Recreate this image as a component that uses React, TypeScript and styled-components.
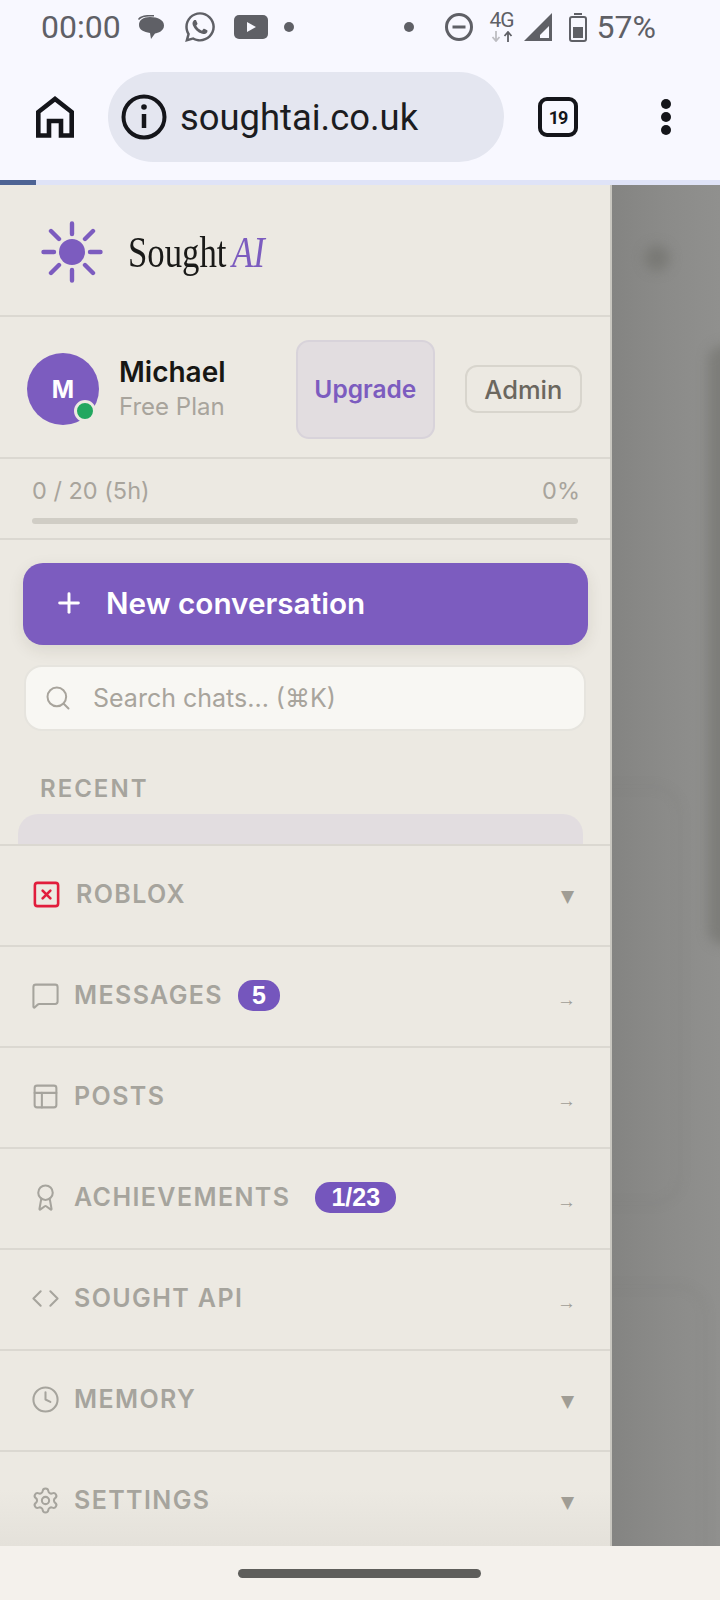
import React from "react"
import styled, { createGlobalStyle } from "styled-components"
import { Award, Clock, Code, MessageSquare, PanelsTopLeft, Plus, Search, Settings, SquareX } from "lucide-react"
import { FaWhatsapp } from "react-icons/fa"

const GlobalStyle = createGlobalStyle`
	html, body {
		margin: 0;
		padding: 0;
		background: #f4f1ec;
	}
	* {
		box-sizing: border-box;
	}
`

const Phone = styled.div`
	display: flex;
	flex-flow: column;
	width: 720px;
	height: 1600px;
	overflow: hidden;
	font-family: Inter, "Liberation Sans", sans-serif;
`

const StatusBar = styled.div`
	display: flex;
	align-items: center;
	justify-content: space-between;
	flex: none;
	height: 54px;
	padding: 0 64px 0 41px;
	background: #f8f8ff;
	color: #5f6066;
	font-family: Roboto, sans-serif;
	font-size: 32px;
`

const StatusGroup = styled.div`
	display: flex;
	align-items: center;
`

const StatusSlot = styled.span<{ $ml: number }>`
	display: flex;
	align-items: center;
	margin-left: ${(p) => p.$ml}px;
`

const Dot = styled.span`
	width: 10px;
	height: 10px;
	border-radius: 50%;
	background: #5f6066;
`

const NetType = styled.div`
	display: flex;
	flex-flow: column;
	align-items: center;
	gap: 1px;
	width: 24px;
	margin-top: -3px;
	font-size: 21px;
	line-height: 20px;
	letter-spacing: -1px;
`

const BrowserBar = styled.div`
	display: flex;
	align-items: center;
	flex: none;
	height: 126px;
	padding: 0 0 0 36px;
	background: #f8f8ff;
`

const AddressPill = styled.div`
	display: flex;
	align-items: center;
	gap: 13px;
	width: 396px;
	height: 90px;
	margin: 0 34px 0 34px;
	padding-left: 13px;
	border-radius: 45px;
	background: #e4e6f0;
	color: #1b1c20;
	font-family: Roboto, sans-serif;
	font-size: 36.4px;
`

const TabCount = styled.div`
	display: flex;
	align-items: center;
	justify-content: center;
	width: 40px;
	height: 40px;
	border: 4px solid #14151a;
	border-radius: 9px;
	color: #14151a;
	font-family: Roboto, sans-serif;
	font-size: 18px;
	font-weight: 700;
	letter-spacing: -1px;
`

const MenuDots = styled.div`
	display: flex;
	flex-flow: column;
	gap: 3px;
	margin-left: 83px;
	span {
		width: 10px;
		height: 10px;
		border-radius: 50%;
		background: #14151a;
	}
`

const LoadBar = styled.div`
	flex: none;
	height: 5px;
	background: #dfe3f7;
	div {
		width: 36px;
		height: 100%;
		background: #4d6394;
	}
`

const Main = styled.div`
	display: flex;
	flex: none;
	height: 1361px;
`

const Sidebar = styled.aside`
	display: flex;
	flex-flow: column;
	width: 612px;
	overflow: hidden;
	border-right: 2px solid #c8c6bf;
	background: linear-gradient(to top, #e4e1da 0, #ece9e2 56px);
	& > * {
		flex: none;
	}
`

const LogoRow = styled.div`
	display: flex;
	align-items: center;
	height: 132px;
	padding: 4px 0 0 40px;
	border-bottom: 2px solid #dbd8d1;
`

const LogoWord = styled.div`
	margin-left: 24px;
	font-family: "Liberation Serif", serif;
	font-size: 44px;
	color: #1a1a18;
	white-space: nowrap;
	transform: scaleX(0.79);
	transform-origin: left center;
	em {
		margin-left: 7px;
		color: #7c5cbf;
	}
`

const ProfileRow = styled.div`
	display: flex;
	align-items: center;
	height: 142px;
	padding: 4px 28px 0 27px;
	border-bottom: 2px solid #dbd8d1;
`

const Avatar = styled.div`
	position: relative;
	display: flex;
	align-items: center;
	justify-content: center;
	flex: none;
	width: 72px;
	height: 72px;
	border-radius: 50%;
	background: #7c5cbf;
	color: #fff;
	font-size: 24px;
	font-weight: 700;
`

const OnlineDot = styled.span`
	position: absolute;
	right: 3px;
	bottom: 3px;
	width: 22px;
	height: 22px;
	border: 3px solid #ece9e2;
	border-radius: 50%;
	background: #22a75f;
`

const ProfileText = styled.div`
	display: flex;
	flex-flow: column;
	gap: 3px;
	width: 178px;
	margin: -2px 0 0 20px;
`

const ProfileName = styled.div`
	color: #171714;
	font-size: 28px;
	font-weight: 600;
	line-height: 34px;
`

const ProfilePlan = styled.div`
	color: #a8a49c;
	font-size: 24px;
	line-height: 30px;
`

const UpgradeButton = styled.button`
	width: 139px;
	height: 99px;
	padding: 0;
	border: 2px solid #d8d3da;
	border-radius: 13px;
	background: #e2dde0;
	color: #7c5cbf;
	font-family: inherit;
	font-size: 24.5px;
	font-weight: 600;
`

const AdminButton = styled.button`
	width: 118px;
	height: 48px;
	margin-left: 30px;
	padding: 0;
	border: 2px solid #d8d5cd;
	border-radius: 12px;
	background: transparent;
	color: #6b675f;
	font-family: inherit;
	font-size: 25.5px;
	font-weight: 550;
`

const UsageBlock = styled.div`
	display: flex;
	flex-flow: column;
	gap: 11px;
	height: 81px;
	padding: 16px 32px 0;
	border-bottom: 2px solid #dbd8d1;
`

const UsageLabels = styled.div`
	display: flex;
	justify-content: space-between;
	margin-right: -2px;
	color: #a8a49c;
	font-size: 23.5px;
	line-height: 32px;
`

const UsageTrack = styled.div`
	height: 6px;
	border-radius: 3px;
	background: #d0cdc5;
`

const NewButton = styled.button`
	display: flex;
	align-items: center;
	gap: 21px;
	width: 565px;
	height: 82px;
	margin: 23px 0 0 23px;
	padding: 0 0 2px 30px;
	border: 0;
	border-radius: 20px;
	background: #7c5cbf;
	box-shadow: 0 5px 16px rgba(60, 50, 30, 0.1);
	color: #fff;
	font-family: inherit;
	font-size: 29.7px;
	font-weight: 600;
`

const SearchBox = styled.div`
	display: flex;
	align-items: center;
	gap: 21px;
	width: 562px;
	height: 66px;
	margin: 20px 0 0 24px;
	padding-left: 18px;
	border: 2px solid #e6e4de;
	border-radius: 18px;
	background: #f8f7f3;
	color: #a8a49c;
	font-size: 25px;
`

const SectionLabel = styled.div`
	margin: 43px 0 0 40px;
	color: #a6a49d;
	font-size: 24px;
	font-weight: 600;
	line-height: 30px;
	letter-spacing: 2px;
`

const RecentClip = styled.div`
	width: 565px;
	height: 30px;
	margin: 10px 0 0 18px;
	border-radius: 20px 20px 0 0;
	background: #e2dde0;
`

const NavRow = styled.div`
	display: flex;
	align-items: center;
	height: 101px;
	padding: 0 36px 3px 35px;
	border-top: 2px solid #dbd8d1;
	color: #a6a49d;
	svg {
		flex: none;
		margin: 0 -2px 0 -4px;
	}
`

const NavLabel = styled.span`
	margin-left: 16px;
	font-size: 25px;
	font-weight: 560;
	letter-spacing: 1.4px;
`

const CountBadge = styled.span<{ $gap: number; $pad: number }>`
	margin-left: ${(p) => p.$gap}px;
	padding: 0 ${(p) => p.$pad}px;
	height: 31px;
	border-radius: 15px;
	background: #7556bd;
	color: #fff;
	font-family: "Liberation Sans", sans-serif;
	font-size: 25px;
	font-weight: 700;
	line-height: 31px;
`

const NavEnd = styled.span<{ $arrow?: boolean }>`
	margin-left: auto;
	margin-top: ${(p) => (p.$arrow ? 10 : 4)}px;
	margin-right: ${(p) => (p.$arrow ? -2 : 0)}px;
	color: #a09d95;
	font-family: ${(p) => (p.$arrow ? '"Liberation Sans"' : '"DejaVu Sans"')}, sans-serif;
	font-size: ${(p) => (p.$arrow ? 19 : 17)}px;
`

const Scrim = styled.div`
	position: relative;
	flex: 1;
	overflow: hidden;
	background: linear-gradient(to right, #848482, #8b8b89 50%, #90908e);
`

const Smudge = styled.div<{ $x: number; $y: number; $w: number; $h: number }>`
	position: absolute;
	left: ${(p) => p.$x}px;
	top: ${(p) => p.$y}px;
	width: ${(p) => p.$w}px;
	height: ${(p) => p.$h}px;
	border-radius: 16px;
	background: rgba(110, 110, 104, 0.55);
	filter: blur(6px);
`

const SmudgeLine = styled(Smudge)`
	border-radius: 30px;
	background: transparent;
	border: 3px solid rgba(120, 120, 115, 0.22);
	filter: blur(4px);
`

const BottomBar = styled.div`
	display: flex;
	align-items: center;
	justify-content: center;
	flex: none;
	height: 54px;
	background: #f4f1ec;
	div {
		width: 243px;
		height: 9px;
		border-radius: 5px;
		background: #5e5e5b;
		margin-left: -1px;
	}
`

const navItems = [
	{ label: "MESSAGES", icon: <MessageSquare size={29} strokeWidth={1.7} />, badge: "5", gap: 15, pad: 14, arrow: true },
	{ label: "POSTS", icon: <PanelsTopLeft size={29} strokeWidth={1.7} />, arrow: true },
	{ label: "ACHIEVEMENTS", icon: <Award size={29} strokeWidth={1.7} />, badge: "1/23", gap: 25, pad: 16, arrow: true },
	{ label: "SOUGHT API", icon: <Code size={29} strokeWidth={1.7} />, arrow: true },
	{ label: "MEMORY", icon: <Clock size={29} strokeWidth={1.7} /> },
	{ label: "SETTINGS", icon: <Settings size={29} strokeWidth={1.7} /> },
]

const SunLogo = () => (
	<svg width="64" height="64" viewBox="0 0 64 64" fill="none" stroke="#7c5cbf" strokeWidth="4.4" strokeLinecap="round">
		<circle cx="32" cy="32" r="13" fill="#7c5cbf" stroke="none" />
		<path d="M32 3.500v10.500M32 50v10.500M3.500 32H14M50 32h10.500M11 11l8 8M45 45l8 8M53 11l-8 8M19 45l-8 8" />
	</svg>
)

const HomeIcon = () => (
	<svg width="38" height="42" viewBox="0 0 38 42" fill="none" stroke="#14151a" strokeWidth="4.6">
		<path d="M2.300 39.500V16L19 3l16.700 13v23.500H25V25H13v14.500z" />
	</svg>
)

const InfoIcon = () => (
	<svg width="46" height="46" viewBox="0 0 46 46" fill="none" stroke="#14151a">
		<circle cx="23" cy="23" r="20.5" strokeWidth="4" />
		<path d="M23 20v14" strokeWidth="4.5" />
		<circle cx="23" cy="13" r="2.8" fill="#14151a" stroke="none" />
	</svg>
)

const BubblesIcon = () => (
	<svg width="28" height="28" viewBox="0 0 28 28" fill="#5f6066">
		<path d="M1 6c2-3 6-4 11-4h5v1.500h-5C8 3.500 4 4.500 2 7z" />
		<path d="M13 4c8 0 14 3 14 8.500S21 20 18 20.500L14 26l-1-6C7 19 2 17 2 12S6 4 13 4z" />
	</svg>
)

const VideoIcon = () => (
	<svg width="34" height="24" viewBox="0 0 34 24">
		<rect width="34" height="24" rx="5" fill="#5f6066" />
		<path d="M13 7l9 5-9 5z" fill="#f8f8ff" />
	</svg>
)

const MuteIcon = () => (
	<svg width="28" height="28" viewBox="0 0 28 28" fill="none" stroke="#5f6066" strokeWidth="3">
		<circle cx="14" cy="14" r="12.500" />
		<path d="M7.500 14h13" />
	</svg>
)

const TinyArrows = () => (
	<svg width="24" height="11" viewBox="0 0 24 11" fill="none" strokeWidth="1.800">
		<path d="M6 0v9M2.500 6 6 10l3.500-4" stroke="#bdbdc2" />
		<path d="M18 11V2M14.500 5 18 1l3.500 4" stroke="#5f6066" />
	</svg>
)

const SignalIcon = () => (
	<svg width="28" height="28" viewBox="0 0 28 28">
		<path d="M0 28 28 0v28z" fill="#5f6066" />
		<path d="M16 25h9V13l-9 9z" fill="#f8f8ff" />
	</svg>
)

const BatteryIcon = () => (
	<svg width="18" height="29" viewBox="0 0 18 29">
		<rect x="5" y="0" width="8" height="2" fill="#5f6066" />
		<rect x="1" y="4" width="16" height="24" rx="2" fill="none" stroke="#5f6066" strokeWidth="2" />
		<rect x="4" y="14" width="10" height="11" fill="#5f6066" />
	</svg>
)

export default function App() {
	return (
		<>
			<GlobalStyle />
			<Phone>
				<StatusBar>
					<StatusGroup>
						<span>00:00</span>
						<StatusSlot $ml={16}><BubblesIcon /></StatusSlot>
						<StatusSlot $ml={18}><FaWhatsapp size={34} /></StatusSlot>
						<StatusSlot $ml={17}><VideoIcon /></StatusSlot>
						<StatusSlot $ml={16}><Dot /></StatusSlot>
					</StatusGroup>
					<StatusGroup>
						<Dot />
						<StatusSlot $ml={31}><MuteIcon /></StatusSlot>
						<StatusSlot $ml={17}>
							<NetType>
								4G
								<TinyArrows />
							</NetType>
						</StatusSlot>
						<StatusSlot $ml={10}><SignalIcon /></StatusSlot>
						<StatusSlot $ml={17}><BatteryIcon /></StatusSlot>
						<StatusSlot $ml={10}>57%</StatusSlot>
					</StatusGroup>
				</StatusBar>
				<BrowserBar>
					<HomeIcon />
					<AddressPill>
						<InfoIcon />
						soughtai.co.uk
					</AddressPill>
					<TabCount>19</TabCount>
					<MenuDots>
						<span />
						<span />
						<span />
					</MenuDots>
				</BrowserBar>
				<LoadBar>
					<div />
				</LoadBar>
				<Main>
					<Sidebar>
						<LogoRow>
							<SunLogo />
							<LogoWord>
								Sought<em>AI</em>
							</LogoWord>
						</LogoRow>
						<ProfileRow>
							<Avatar>
								M
								<OnlineDot />
							</Avatar>
							<ProfileText>
								<ProfileName>Michael</ProfileName>
								<ProfilePlan>Free Plan</ProfilePlan>
							</ProfileText>
							<UpgradeButton>Upgrade</UpgradeButton>
							<AdminButton>Admin</AdminButton>
						</ProfileRow>
						<UsageBlock>
							<UsageLabels>
								<span>0 / 20 (5h)</span>
								<span>0%</span>
							</UsageLabels>
							<UsageTrack />
						</UsageBlock>
						<NewButton>
							<Plus size={32} strokeWidth={2.2} />
							New conversation
						</NewButton>
						<SearchBox>
							<Search size={28} strokeWidth={1.7} />
							Search chats... (⌘K)
						</SearchBox>
						<SectionLabel>RECENT</SectionLabel>
						<RecentClip />
						<NavRow>
							<SquareX size={31} strokeWidth={2} color="#e11d3c" />
							<NavLabel>ROBLOX</NavLabel>
							<NavEnd>▼</NavEnd>
						</NavRow>
						{navItems.map((item) => (
							<NavRow key={item.label}>
								{item.icon}
								<NavLabel>{item.label}</NavLabel>
								{item.badge && <CountBadge $gap={item.gap ?? 0} $pad={item.pad ?? 15}>{item.badge}</CountBadge>}
								<NavEnd $arrow={item.arrow}>{item.arrow ? "→" : "▼"}</NavEnd>
							</NavRow>
						))}
					</Sidebar>
					<Scrim>
						<Smudge $x={32} $y={60} $w={26} $h={26} />
						<Smudge $x={96} $y={160} $w={40} $h={600} />
						<SmudgeLine $x={-60} $y={600} $w={130} $h={420} />
						<SmudgeLine $x={-60} $y={1100} $w={155} $h={300} />
					</Scrim>
				</Main>
				<BottomBar>
					<div />
				</BottomBar>
			</Phone>
		</>
	)
}
